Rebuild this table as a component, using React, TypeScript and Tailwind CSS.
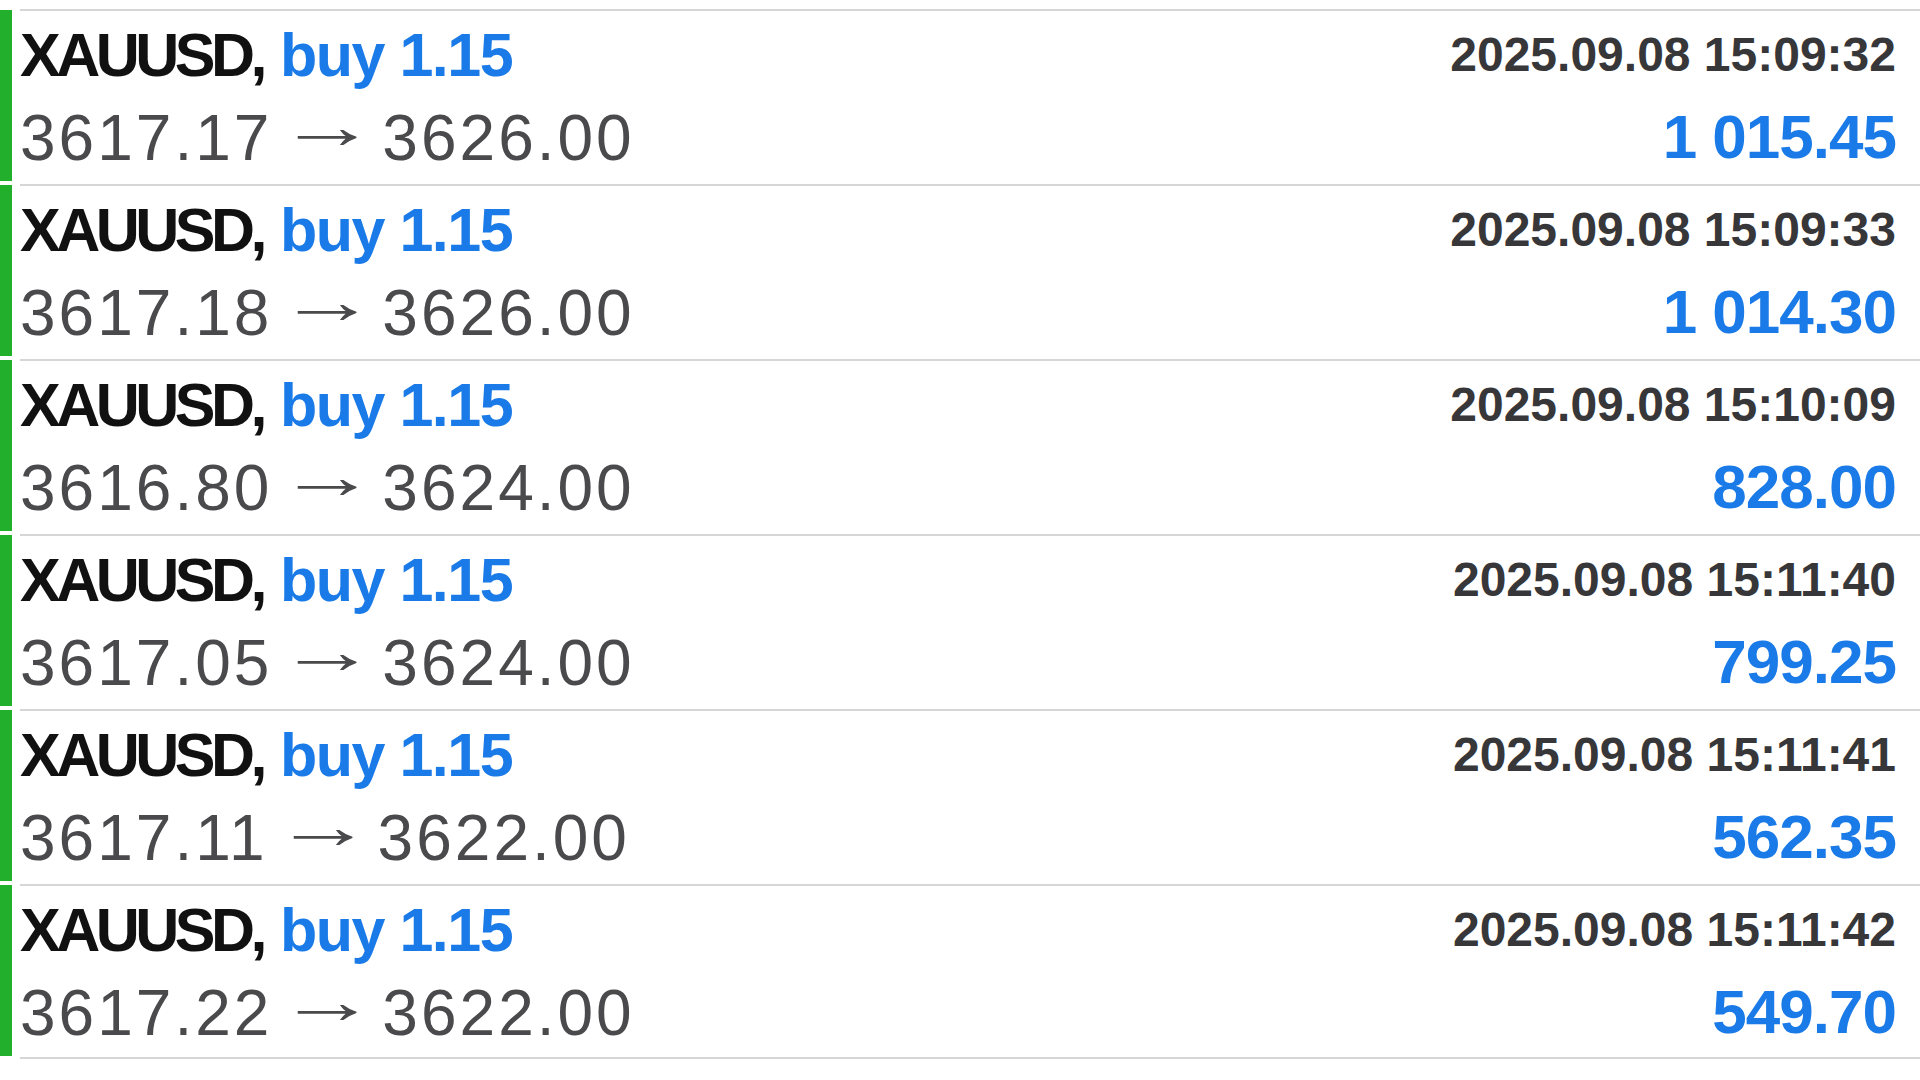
import React from 'react';

type Deal = {
  id: number;
  open: string;
  close: string;
  time: string;
  profit: string;
};

const deals: Deal[] = [
  { id: 1, open: '3617.17', close: '3626.00', time: '2025.09.08 15:09:32', profit: '1 015.45' },
  { id: 2, open: '3617.18', close: '3626.00', time: '2025.09.08 15:09:33', profit: '1 014.30' },
  { id: 3, open: '3616.80', close: '3624.00', time: '2025.09.08 15:10:09', profit: '828.00' },
  { id: 4, open: '3617.05', close: '3624.00', time: '2025.09.08 15:11:40', profit: '799.25' },
  { id: 5, open: '3617.11', close: '3622.00', time: '2025.09.08 15:11:41', profit: '562.35' },
  { id: 6, open: '3617.22', close: '3622.00', time: '2025.09.08 15:11:42', profit: '549.70' },
];

function DealRow({ deal, last }: { deal: Deal; last: boolean }) {
  return (
    <div className="flex h-[175px]">
      <div className="w-[12px] mt-[1px] mb-[3px] bg-[#22b02c]" />
      <div
        className={
          'flex-1 ml-[8px] flex justify-between border-t-2 border-[#d6d6d6] pr-[24px] ' +
          (last ? 'border-b-2' : '')
        }
      >
        <div className="flex flex-col pt-[14px]">
          <div className="h-[61px] text-[61px] leading-none font-bold whitespace-nowrap">
            <span className="text-[#111111] tracking-[-4.5px]">XAUUSD,</span>{' '}
            <span className="text-[#1a7be8] tracking-[-1.5px]">buy 1.15</span>
          </div>
          <div className="mt-[20px] h-[64px] flex items-center text-[64px] leading-none text-[#4a4a4c] whitespace-nowrap">
            <span className="tracking-[3px]">{deal.open}</span>
            <span className="ml-[23px] mr-[23px] leading-none scale-x-[1.55] -translate-y-[12px]">→</span>
            <span className="tracking-[3px]">{deal.close}</span>
          </div>
        </div>
        <div className="flex flex-col items-end pt-[20px]">
          <div className="h-[48px] text-[48px] leading-none font-bold text-[#37373a] whitespace-nowrap">
            {deal.time}
          </div>
          <div className="mt-[27px] text-[62px] leading-none font-bold text-[#1a7be8] tracking-[-1px] whitespace-nowrap">
            {deal.profit}
          </div>
        </div>
      </div>
    </div>
  );
}

export default function App() {
  return (
    <div className="w-[1920px] h-[1080px] bg-white pt-[9px] overflow-hidden font-['Liberation_Sans',Arial,sans-serif]">
      {deals.map((d, i) => (
        <DealRow key={d.id} deal={d} last={i === deals.length - 1} />
      ))}
    </div>
  );
}
